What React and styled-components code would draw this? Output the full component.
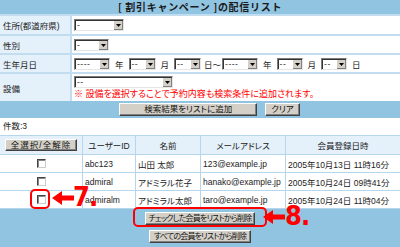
import React from 'react';
import styled, { createGlobalStyle } from 'styled-components';

const GlobalStyle = createGlobalStyle`
  html, body {
    margin: 0;
    padding: 0;
    background: #fff;
  }
  body {
    font-family: "Liberation Sans", "Noto Sans CJK JP", sans-serif;
    font-size: 8.5px;
    color: #222;
    font-feature-settings: "palt";
  }
`;

const BLUE = '#90c4e1';
const PALE = '#e4f0fa';
const LINE = '#c3ddf0';

const searchRows = [
  { label: '住所(都道府県)', h: 18 },
  { label: '性別', h: 17 },
  { label: '生年月日', h: 17 },
  { label: '設備', h: 27 },
];

const members = [
  ['abc123', '山田 太郎', '123@example.jp', '2005年10月13日 11時16分'],
  ['admiral', 'アドミラル花子', 'hanako@example.jp', '2005年10月24日 09時41分'],
  ['admiralm', 'アドミラル太郎', 'taro@example.jp', '2005年10月24日 11時04分'],
];

const Select = ({ w, text }) => (
  <SelectBox $w={w}>
    <SelectText>{text}</SelectText>
    <SelectArrow>
      <svg width="5" height="3" viewBox="0 0 5 3">
        <path d="M0 0h5L2.5 3z" fill="#000" />
      </svg>
    </SelectArrow>
  </SelectBox>
);

const Arrow = ({ x, y }) => (
  <ArrowSvg style={{ left: x, top: y }} width="22" height="14" viewBox="0 0 22 14">
    <path d="M0 7L10 0V4.5H22V9.5H10V14Z" fill="#f00" />
  </ArrowSvg>
);

const App = () => {
  return (
    <Page>
      <GlobalStyle />
      <SearchPanel>
        <Title>[ 割引キャンペーン ]の配信リスト</Title>
        <FormGrid>
          <Label $h={searchRows[0].h}>{searchRows[0].label}</Label>
          <Field>
            <Select w={50} text="-" />
          </Field>
          <Label $h={searchRows[1].h}>{searchRows[1].label}</Label>
          <Field>
            <Select w={35} text="-" />
          </Field>
          <Label $h={searchRows[2].h}>{searchRows[2].label}</Label>
          <Field>
            <Select w={36} text="----" />
            <Unit>年</Unit>
            <Select w={27} text="--" />
            <Unit>月</Unit>
            <Select w={27} text="--" />
            <Unit $tight>日～</Unit>
            <Select w={36} text="----" />
            <Unit>年</Unit>
            <Select w={26} text="--" />
            <Unit>月</Unit>
            <Select w={26} text="--" />
            <Unit>日</Unit>
          </Field>
          <Label $h={searchRows[3].h}>{searchRows[3].label}</Label>
          <Field $stack>
            <Select w={99} text="--" />
            <Note>※ 設備を選択することで予約内容も検索条件に追加されます。</Note>
          </Field>
        </FormGrid>
        <ButtonRow>
          <Button $px={24}>検索結果をリストに追加</Button>
          <Button $px={5}>クリア</Button>
        </ButtonRow>
      </SearchPanel>

      <Count>件数:3</Count>

      <ResultGrid>
        <HeadCell>
          <SmallButton>全選択/全解除</SmallButton>
        </HeadCell>
        <HeadCell>ユーザーID</HeadCell>
        <HeadCell>名前</HeadCell>
        <HeadCell>メールアドレス</HeadCell>
        <HeadCell>会員登録日時</HeadCell>
        {members.map((m) => (
          <React.Fragment key={m[0]}>
            <Cell $center>
              <Check />
            </Cell>
            {m.map((v) => (
              <Cell key={v}>{v}</Cell>
            ))}
          </React.Fragment>
        ))}
      </ResultGrid>

      <BottomPanel>
        <DeleteButton $px={3}>チェックした会員をリストから削除</DeleteButton>
        <DeleteButton $px={4}>すべての会員をリストから削除</DeleteButton>
      </BottomPanel>

      {/* annotations */}
      <Ring style={{ left: 30, top: 189, width: 20, height: 20 }} />
      <Arrow x={52} y={191} />
      <StepNo style={{ left: 73, top: 187 }}>7.</StepNo>

      <Ring style={{ left: 133, top: 207, width: 134, height: 20 }} />
      <Arrow x={263} y={210} />
      <StepNo style={{ left: 285, top: 206 }}>8.</StepNo>
    </Page>
  );
};

export default App;

const Page = styled.div`
  position: relative;
  width: 400px;
  height: 247px;
  overflow: hidden;
  background: ${BLUE};
`;

const SearchPanel = styled.section`
  background: ${BLUE};
`;

const Title = styled.div`
  height: 14px;
  line-height: 14px;
  text-align: center;
  font-family: "Noto Sans CJK JP", sans-serif;
  font-size: 10px;
  font-weight: bold;
  letter-spacing: 0.7px;
  font-feature-settings: normal;
  color: #1a1a1a;
`;

const FormGrid = styled.div`
  display: grid;
  grid-template-columns: 70px 1fr;
  gap: 2px;
  padding-top: 2px;
  background: ${LINE};
`;

const Label = styled.div`
  height: ${(p) => p.$h}px;
  display: flex;
  align-items: center;
  padding-left: 3px;
  background: ${PALE};
  color: #222;
`;

const Field = styled.div`
  display: flex;
  flex-direction: ${(p) => (p.$stack ? 'column' : 'row')};
  align-items: ${(p) => (p.$stack ? 'flex-start' : 'center')};
  padding: ${(p) => (p.$stack ? '2px 0 0 2px' : '0 0 0 2px')};
  background: #fff;
`;

const SelectBox = styled.div`
  box-sizing: border-box;
  width: ${(p) => p.$w}px;
  height: 12px;
  display: flex;
  background: #fff;
  border: 1px solid;
  border-color: #7b7b7b #e6e6e6 #e6e6e6 #7b7b7b;
  box-shadow: inset 1px 1px 0 #333;
`;

const SelectText = styled.span`
  flex: 1;
  padding-left: 2px;
  line-height: 10px;
  color: #333;
  letter-spacing: 0.5px;
`;

const SelectArrow = styled.span`
  width: 9px;
  margin-top: 1px;
  display: flex;
  align-items: center;
  justify-content: center;
  background: #d4d0c8;
  border-left: 1px solid #fff;
  box-shadow: inset -1px -1px 0 #808080;
`;

const Unit = styled.span`
  margin: 0 ${(p) => (p.$tight ? '1px' : '5px')} 0 ${(p) => (p.$tight ? '3px' : '5px')};
  color: #222;
`;

const Note = styled.div`
  margin-top: 1px;
  font-size: 9px;
  line-height: 10px;
  color: #f00;
`;

const ButtonRow = styled.div`
  height: 17px;
  display: flex;
  align-items: center;
  justify-content: center;
  gap: 8px;
  padding-left: 19px;
`;

const Button = styled.button`
  box-sizing: border-box;
  height: 13px;
  padding: 0 ${(p) => p.$px}px;
  font-family: inherit;
  font-size: 8.5px;
  line-height: 9px;
  color: #111;
  background: #d4d0c8;
  border: 1px solid;
  border-color: #fff #404040 #404040 #fff;
  box-shadow: inset -1px -1px 0 #808080;
  border-radius: 0;
  font-feature-settings: "palt";
`;

const DeleteButton = styled(Button)`
  font-size: 8px;
  letter-spacing: -0.8px;
`;

const SmallButton = styled(Button)`
  width: 72px;
  height: 12px;
  padding: 0;
  letter-spacing: 1px;
`;

const Count = styled.div`
  height: 17px;
  line-height: 16px;
  padding-left: 3px;
  background: #fff;
`;

const ResultGrid = styled.div`
  display: grid;
  grid-template-columns: 82px 52px 64px 84px 1fr;
  grid-template-rows: 18px 17px 17px 17px;
  gap: 1px;
  padding: 1px 0;
  background: #b6d6ec;
`;

const HeadCell = styled.div`
  display: flex;
  align-items: center;
  justify-content: center;
  background: ${PALE};
`;

const Cell = styled.div`
  display: flex;
  align-items: center;
  justify-content: ${(p) => (p.$center ? 'center' : 'flex-start')};
  padding-left: ${(p) => (p.$center ? 0 : 2)}px;
  background: #fff;
  white-space: nowrap;
  overflow: hidden;
`;

const Check = styled.span`
  box-sizing: border-box;
  width: 9px;
  height: 9px;
  background: #fff;
  border: 1px solid;
  border-color: #444 #ccc #ccc #444;
  box-shadow: inset 1px 1px 0 #888;
`;

const BottomPanel = styled.section`
  display: flex;
  flex-direction: column;
  align-items: center;
  gap: 5px;
  padding-top: 3px;
`;

const Ring = styled.div`
  position: absolute;
  box-sizing: border-box;
  border: 2px solid #f00;
  border-radius: 5px;
`;

const ArrowSvg = styled.svg`
  position: absolute;
`;

const StepNo = styled.span`
  position: absolute;
  font-family: "DejaVu Sans Condensed", "Liberation Sans Narrow", "Liberation Sans", sans-serif;
  font-weight: bold;
  font-size: 27px;
  line-height: 20px;
  letter-spacing: -1px;
  color: #f00;
`;
